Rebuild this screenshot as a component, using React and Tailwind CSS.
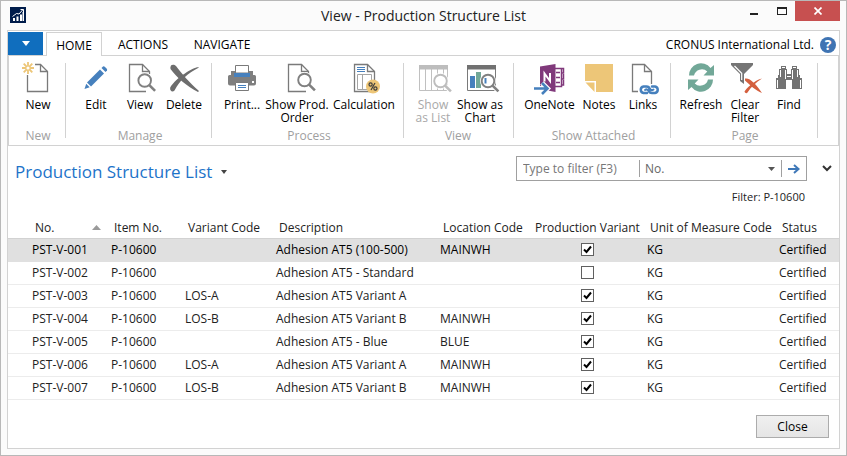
import React from "react";

const GRAY = "#7a7a7a";
const BLUE = "#4680bd";

function Icon({ children }) {
  return (
    <svg viewBox="0 0 32 32" className="size-8 overflow-visible" fill="none" aria-hidden="true">
      {children}
    </svg>
  );
}

function Page({ d = "M5.500 30.500V3.500H18.500L25.500 10.500V30.500Z", fold = "M18.500 3.500V10.500H25.500", color = GRAY }) {
  return (
    <g stroke={color} strokeWidth="1.300">
      <path d={d} />
      <path d={fold} />
    </g>
  );
}

function Lens({ cx, cy, color = "#808080" }) {
  return (
    <g stroke={color}>
      <circle cx={cx} cy={cy} r="8" fill="#fff" stroke="none" />
      <path d={`M${cx + 4} ${cy + 4}L${cx + 11} ${cy + 11}`} stroke="#fff" strokeWidth="4.500" />
      <circle cx={cx} cy={cy} r="6.300" strokeWidth="1.900" />
      <path d={`M${cx + 4.6} ${cy + 4.6}L${cx + 10.4} ${cy + 10.4}`} strokeWidth="2.600" />
    </g>
  );
}

const NewIcon = () => (
  <Icon>
    <Page d="M5.5 14V30.500H25.500V10.500L18.500 3.500H13" />
    <g stroke="#edc678" strokeWidth="1.800">
      <circle cx="6" cy="7" r="2.300" strokeWidth="1.500" />
      <path d="M6 1V4M6 10V13M0 7H3M9 7H12M1.700 2.700L4 5M8 9L10.300 11.300M10.300 2.700L8 5M4 9L1.700 11.300" />
    </g>
  </Icon>
);

const EditIcon = () => (
  <Icon>
    <g fill={BLUE}>
      <path d="M20 8.500L24 12.500L11 25.500L7 21.500Z" />
      <path d="M21.500 7L23 5.500Q24 5 25 6L26.500 7.500Q27.500 8.500 27 9.500L25.500 11Z" />
      <path d="M6.200 22.800L9.700 26.300L4.500 28Z" />
    </g>
  </Icon>
);

const ViewIcon = () => (
  <Icon>
    <Page d="M22 30.500H5.500V3.500H18.500L25.500 10.500V13" />
    <Lens cx={20.700} cy={19.500} />
  </Icon>
);

const ProdIcon = () => (
  <Icon>
    <g transform="translate(2 0)">
      <Page d="M23 30.500H5.500V3.500H18.500L25.500 10.500V13" />
      <Lens cx={21.500} cy={19} />
    </g>
  </Icon>
);

const DeleteIcon = () => (
  <Icon>
    <g fill="#6d6d6d">
      <path d="M3 4.500C4 3.500 6.500 3.500 8 5C14 13 21 21 31 30L30 31C19 25 9 17 2.500 8Q2 6 3 4.500Z" />
      <path d="M31 6.500C27 5 9 16 2.200 26.500C1.500 30 4.500 31.500 6.500 29.500C12 19 20 12 31 6.500Z" />
    </g>
  </Icon>
);

const PrintIcon = () => (
  <Icon>
    <path d="M3.500 14Q2 14 2 15.500V22.500Q2 24.500 4 24.500H28Q30 24.500 30 22.500V15.500Q30 14 28.500 14H27V10H5V14Z" fill="#7f7f7f" />
    <path d="M9.500 4.500H22.500V12H9.500Z" fill="#fff" stroke={GRAY} />
    <path d="M8 12H24V16H8Z" fill={BLUE} />
    <path d="M9.500 21.500H22.500V29.500H9.500Z" fill="#fff" stroke={GRAY} />
    <path d="M12 24.500H20M12 26.500H20" stroke={BLUE} />
    <path d="M26 20H28V22H26Z" fill="#fff" />
  </Icon>
);

const CalculationIcon = () => (
  <Icon>
    <Page d="M6.500 30.500V3.500H19.500L26.500 10.500V30.500Z" fold="M19.500 3.500V10.500H26.500" />
    <path d="M9 6.500H17M9 8.500H17M9 10.500H17" stroke={BLUE} />
    <path d="M9.500 13.500H23.500V28.500H9.500ZM14.500 13.500V28.500" stroke="#a5a5a5" />
    <circle cx="25" cy="25.500" r="7" fill="#edc678" />
    <g stroke="#3c3c3c" strokeWidth="1.200">
      <circle cx="22.600" cy="23.500" r="1.600" />
      <circle cx="27.400" cy="27.500" r="1.600" />
      <path d="M27 22L23 29" />
    </g>
  </Icon>
);

const ListIcon = () => (
  <Icon>
    <path d="M2.500 6V29.500H30.500V6M8.500 6V29M14.500 6V29M20.500 6V29M26.500 6V29" stroke="#c0c0c0" />
    <path d="M2 4H31V8.500H2Z" fill="#bdbdbd" />
    <Lens cx={23.500} cy={20} color="#bdbdbd" />
  </Icon>
);

const ChartIcon = () => (
  <Icon>
    <path d="M3.500 6V29.500H31.500V6" stroke={GRAY} />
    <path d="M3 4H32V8.500H3Z" fill="#717171" />
    <path d="M6 15H11V27H6Z" fill={BLUE} />
    <path d="M12 11H17V27H12Z" fill="#72a898" />
    <Lens cx={24} cy={20} />
    <path d="M20.500 17H22.500V22.500H20.500Z" fill={BLUE} />
  </Icon>
);

const OneNoteIcon = () => (
  <Icon>
    <path d="M20 7.500H27.500V25.500H20M27 12H29.500V7.500H27M27 18H29.500V13M27 24H29.500V19M22 11.500H26M22 16.500H26M22 21.500H26" stroke="#80397b" strokeWidth="1.500" />
    <path d="M6 5.500L21.500 3V31L6 28Z" fill="#80397b" />
    <path d="M10.500 20.500V12.500L16 20V12" stroke="#fff" strokeWidth="2" />
    <path d="M0 27.500H13M8 22L13.500 27.500L8 33" stroke="#fff" strokeWidth="5" />
    <path d="M0 27.500H13M8 22L13.500 27.500L8 33" stroke={BLUE} strokeWidth="2.600" />
  </Icon>
);

const NotesIcon = () => (
  <Icon>
    <path d="M2 3H30V31H13V20H2Z" fill="#edc678" />
    <path d="M2.500 21.500H11.500V31Z" fill="#edc678" />
  </Icon>
);

const LinksIcon = () => (
  <Icon>
    <Page d="M11 30.500H5.500V3.500H17.500L24.500 10.500V23" fold="M17.500 3.500V10.500H24.500" />
    <g stroke={BLUE} strokeWidth="2.500" strokeLinecap="round">
      <path d="M20 32H16.500A3.300 3.300 0 0 1 16.500 25.500H19.500Q22 25.500 22.800 28" />
      <path d="M25 25.500H28A3.300 3.300 0 0 1 28 32H25Q22.500 32 21.500 29.500" />
      <path d="M18 29Q20 27.500 21.500 29.500M22.800 28Q24.500 30 26.500 28.500" strokeWidth="2" />
    </g>
  </Icon>
);

const RefreshIcon = () => (
  <Icon>
    <g fill="#72a898">
      <path d="M4 14.500A12 12 0 0 1 25.500 7L29 4V14.500H18.500L22.300 10.500A8 8 0 0 0 9 14.500Z" />
      <path d="M28 18.500A12 12 0 0 1 6.500 26L3 29V18.500H13.500L9.700 22.500A8 8 0 0 0 23 18.500Z" />
    </g>
  </Icon>
);

const ClearIcon = () => (
  <Icon>
    <path d="M2 2H24V4L15 13V23L11 20V13L2 4Z" fill="#757575" />
    <path d="M5.500 5L12.700 12.300V19" stroke="#fff" strokeWidth="1.200" />
    <g fill="#d4603f">
      <path d="M16 17.500C21 16.500 27 23 33 32C27 30 21 24 16 19.500Z" />
      <path d="M33 17.500C29 18 20 24 15.500 30.500C16 32.500 18 32.500 18.500 31.500C22 26 27 21.500 33 17.500Z" />
    </g>
  </Icon>
);

const FindIcon = () => (
  <Icon>
    <path d="M8 5H13V8H14V13H18V8H19V5H24V8H26V14H27V17H29V28H19V19H13V28H3V17H5V14H6V8H8Z" fill="#737373" />
    <path d="M9 6.500H12M20 6.500H23M7.500 16V9M24.500 16V9M4.500 19V27M27.500 19V27M14 15.500H18M12.500 9V18M19.500 9V18" stroke="#fff" />
  </Icon>
);

const groups = [
  { name: "New", pad: "pl-[7px] pr-[5px]", items: [{ label: "New", icon: NewIcon, w: "w-11" }] },
  {
    name: "Manage",
    pad: "pl-2 pr-[5px]",
    items: [
      { label: "Edit", icon: EditIcon, w: "w-11" },
      { label: "View", icon: ViewIcon, w: "w-11" },
      { label: "Delete", icon: DeleteIcon, w: "w-11" },
    ],
  },
  {
    name: "Process",
    pad: "pl-2 pr-[5px]",
    items: [
      { label: "Print...", icon: PrintIcon, w: "w-11" },
      { label: "Show Prod.\nOrder", icon: ProdIcon, w: "w-[66px]" },
      { label: "Calculation", icon: CalculationIcon, w: "w-[68px]" },
    ],
  },
  {
    name: "View",
    pad: "pl-[7px] pr-2",
    items: [
      { label: "Show\nas List", icon: ListIcon, w: "w-11", disabled: true },
      { label: "Show as\nChart", icon: ChartIcon, w: "w-[50px]" },
    ],
  },
  {
    name: "Show Attached",
    pad: "pl-2 pr-[5px]",
    items: [
      { label: "OneNote", icon: OneNoteIcon, w: "w-[55px]" },
      { label: "Notes", icon: NotesIcon, w: "w-11" },
      { label: "Links", icon: LinksIcon, w: "w-11" },
    ],
  },
  {
    name: "Page",
    pad: "pl-2 pr-[6px]",
    items: [
      { label: "Refresh", icon: RefreshIcon, w: "w-11" },
      { label: "Clear\nFilter", icon: ClearIcon, w: "w-11" },
      { label: "Find", icon: FindIcon, w: "w-11" },
    ],
  },
];

const rows = [
  ["PST-V-001", "", "Adhesion AT5 (100-500)", "MAINWH", true],
  ["PST-V-002", "", "Adhesion AT5 - Standard", "", false],
  ["PST-V-003", "LOS-A", "Adhesion AT5 Variant A", "", true],
  ["PST-V-004", "LOS-B", "Adhesion AT5 Variant B", "MAINWH", true],
  ["PST-V-005", "", "Adhesion AT5 - Blue", "BLUE", true],
  ["PST-V-006", "LOS-A", "Adhesion AT5 Variant A", "MAINWH", true],
  ["PST-V-007", "LOS-B", "Adhesion AT5 Variant B", "MAINWH", true],
];

function TitleBar() {
  return (
    <header className="grid h-[29px] grid-cols-[1fr_auto_1fr] items-start">
      <svg viewBox="0 0 16 16" className="mt-[6px] ml-[9px] size-4" aria-hidden="true">
        <path d="M0 0H16V16H0Z" fill="#001c4b" />
        <path d="M3 14V11H5V14ZM6.500 14V9.500H8.500V14ZM10 14V7.500H12V14ZM12.500 14V5H14V14Z" fill="#fff" />
        <path d="M2.500 9.500L6.500 6.500L9 7L13 2.500M10.500 2.500H13.500V5" fill="none" stroke="#fff" />
      </svg>
      <h1 className="pt-[5px] text-sm leading-5 text-[#222]">View - Production Structure List</h1>
      <div className="flex justify-end pr-[6px]">
        <button aria-label="Minimize" className="flex h-5 w-[30px] items-center justify-center">
          <svg viewBox="0 0 10 10" className="size-[10px]"><path d="M1 7H9V9H1Z" fill="#222" /></svg>
        </button>
        <button aria-label="Maximize" className="flex h-5 w-[26px] items-center justify-center">
          <svg viewBox="0 0 10 10" className="size-[10px]"><path d="M0 1H10V9H0ZM1 3V8H9V3Z" fill="#222" fillRule="evenodd" /></svg>
        </button>
        <button aria-label="Close window" className="flex h-5 w-[45px] items-center justify-center bg-[#c75050]">
          <svg viewBox="0 0 8 8" className="size-2"><path d="M0.500 0.500L7.500 7.500M7.500 0.500L0.500 7.500" stroke="#fff" strokeWidth="1.700" /></svg>
        </button>
      </div>
    </header>
  );
}

function Tabs() {
  return (
    <nav className="flex h-6 items-stretch pt-px text-xs">
      <button aria-label="Application menu" className="mr-[3px] flex w-[35px] items-center justify-center bg-[#106ebe]">
        <svg viewBox="0 0 8 5" className="h-[5px] w-2"><path d="M0 0H8L4 5Z" fill="#fff" /></svg>
      </button>
      <button className="z-10 -mb-px w-14 border border-b-0 border-[#d2d2d2] bg-white pt-[2px] text-black">HOME</button>
      <button className="w-[82px] pt-[2px] text-black">ACTIONS</button>
      <button className="w-[76px] pt-[2px] text-black">NAVIGATE</button>
      <div className="flex flex-1 items-center justify-end gap-[6px] pt-[2px] pr-[3px] whitespace-nowrap text-black">
        CRONUS International Ltd.
        <button aria-label="Help" className="flex size-4 items-center justify-center rounded-full bg-[#3f74b3] text-sm leading-4 font-bold text-white">?</button>
      </div>
    </nav>
  );
}

function Ribbon() {
  return (
    <div className="flex h-[91px] border border-[#d2d2d2]">
      {groups.map((g) => (
        <React.Fragment key={g.name}>
          <section aria-label={g.name} className={`flex flex-col pt-[5px] ${g.pad}`}>
            <div className="flex h-[68px] items-start">
              {g.items.map(({ label, icon: Pic, w, disabled }) => (
                <button key={label} disabled={disabled} className={`flex flex-col items-center text-xs leading-[13px] text-black disabled:text-[#a8a8a8] ${w}`}>
                  <Pic />
                  <span className="mt-[5px] whitespace-pre">{label}</span>
                </button>
              ))}
            </div>
            <div className="text-center text-xs leading-[13px] text-[#a0a0a0]">{g.name}</div>
          </section>
          <div className="my-[7px] w-px bg-[#d2d2d2]" />
        </React.Fragment>
      ))}
    </div>
  );
}

function FilterBar() {
  return (
    <div className="flex items-start justify-between pt-[10px] pr-[6px] pl-[7px]">
      <h2 className="flex items-center gap-2 pt-1 text-[17px] leading-6 text-[#1d73c9]">
        Production Structure List
        <button aria-label="Page options" className="p-px">
          <svg viewBox="0 0 6 4" className="h-1 w-[6px]"><path d="M0 0H6L3 4Z" fill="#444" /></svg>
        </button>
      </h2>
      <div className="flex flex-col">
        <div className="flex items-center">
          <div className="flex h-[25px] w-[291px] items-center border border-[#a0a0a0] text-xs text-[#666]">
            <input aria-label="Type to filter" placeholder="Type to filter (F3)" className="h-5 w-[122px] pl-[6px] outline-none placeholder:text-[#777]" />
            <div className="grid h-[17px] flex-1 items-center border-x border-[#a0a0a0]">
              <select aria-label="Filter column" className="col-start-1 row-start-1 w-full appearance-none bg-transparent pl-[5px] outline-none">
                <option>No.</option>
                <option>Item No.</option>
                <option>Description</option>
              </select>
              <svg viewBox="0 0 7 4" className="pointer-events-none col-start-1 row-start-1 mr-[6px] h-1 w-[7px] justify-self-end"><path d="M0 0H7L3.500 4Z" fill="#555" /></svg>
            </div>
            <button aria-label="Apply filter" className="flex w-6 justify-center">
              <svg viewBox="0 0 12 10" className="h-[10px] w-3"><path d="M0 5H10M6 1L10.500 5L6 9" fill="none" stroke="#3f78b8" strokeWidth="2" /></svg>
            </button>
          </div>
          <button aria-label="Expand filter" className="ml-[14px] p-px">
            <svg viewBox="0 0 10 7" className="h-[7px] w-[10px]"><path d="M1 1L5 5L9 1" fill="none" stroke="#333" strokeWidth="2" /></svg>
          </button>
        </div>
        <div className="pt-2 pr-7 text-right text-[11px] leading-4 text-[#222]">Filter: P-10600</div>
      </div>
    </div>
  );
}

function Check({ checked, label }) {
  return (
    <label className="mx-auto grid size-[13px]">
      <input type="checkbox" defaultChecked={checked} aria-label={label} className="peer col-start-1 row-start-1 size-[13px] appearance-none border border-[#606060] bg-white" />
      <svg viewBox="0 0 13 13" className="pointer-events-none invisible col-start-1 row-start-1 size-[13px] peer-checked:visible">
        <path d="M3 6.500L5.500 9L10 3.500" fill="none" stroke="#000" strokeWidth="2" />
      </svg>
    </label>
  );
}

function ListTable() {
  return (
    <table className="mt-2 w-full table-fixed text-left text-xs whitespace-nowrap text-[#222]">
      <colgroup>
        <col className="w-[99px]" />
        <col className="w-[74px]" />
        <col className="w-[91px]" />
        <col />
        <col className="w-[92px]" />
        <col className="w-[115px]" />
        <col className="w-[132px]" />
        <col className="w-16" />
      </colgroup>
      <thead>
        <tr className="h-[25px] border-b border-[#d2d2d2] [&>th]:pt-[5px] [&>th]:pl-[7px] [&>th]:font-normal">
          <th>
            <span className="flex items-center justify-between pr-[6px] pl-5">
              No.
              <svg viewBox="0 0 9 5" className="h-[5px] w-[9px]"><path d="M0 5H9L4.500 0Z" fill="#9a9a9a" /></svg>
            </span>
          </th>
          <th>Item No.</th>
          <th>Variant Code</th>
          <th>Description</th>
          <th>Location Code</th>
          <th>Production Variant</th>
          <th>Unit of Measure Code</th>
          <th>Status</th>
        </tr>
      </thead>
      <tbody>
        {rows.map(([no, variant, description, location, checked]) => (
          <tr key={no} className="h-[23px] border-b border-[#ececec] [&>td]:pl-1 first:border-[#e0e0e0] first:bg-[#e0e0e0] first:text-black">
            <td><span className="pl-5">{no}</span></td>
            <td>P-10600</td>
            <td>{variant}</td>
            <td>{description}</td>
            <td>{location}</td>
            <td><Check checked={checked} label={`Production variant ${no}`} /></td>
            <td>KG</td>
            <td>Certified</td>
          </tr>
        ))}
      </tbody>
    </table>
  );
}

export default function App() {
  return (
    <div className="flex min-h-screen flex-col border border-[#b8b8b8] bg-[#fbfbfb] font-['Open_Sans',sans-serif]">
      <TitleBar />
      <main className="mx-[6px] mb-[6px] flex flex-1 flex-col border border-[#d2d2d2] bg-white">
        <Tabs />
        <Ribbon />
        <FilterBar />
        <ListTable />
        <div className="mt-auto flex justify-end px-[10px] pb-[10px]">
          <button className="h-[23px] w-[73px] border border-[#acacac] bg-linear-to-b from-[#f0f0f0] to-[#e5e5e5] text-xs text-black">Close</button>
        </div>
      </main>
    </div>
  );
}
